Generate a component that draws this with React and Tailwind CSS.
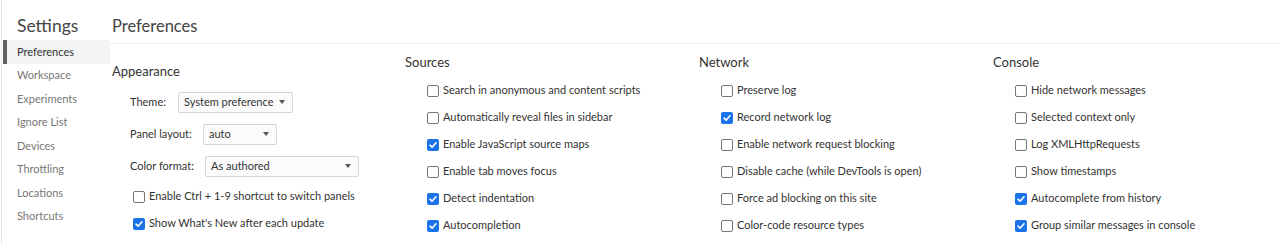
import React from 'react'

const navItems = ['Preferences', 'Workspace', 'Experiments', 'Ignore List', 'Devices', 'Throttling', 'Locations', 'Shortcuts']

const sources = [
  ['Search in anonymous and content scripts', false],
  ['Automatically reveal files in sidebar', false],
  ['Enable JavaScript source maps', true],
  ['Enable tab moves focus', false],
  ['Detect indentation', true],
  ['Autocompletion', true],
]

const network = [
  ['Preserve log', false],
  ['Record network log', true],
  ['Enable network request blocking', false],
  ['Disable cache (while DevTools is open)', false],
  ['Force ad blocking on this site', false],
  ['Color-code resource types', false],
]

const consoleOpts = [
  ['Hide network messages', false],
  ['Selected context only', false],
  ['Log XMLHttpRequests', false],
  ['Show timestamps', false],
  ['Autocomplete from history', true],
  ['Group similar messages in console', true],
]

function Box({ checked }) {
  if (checked) {
    return (
      <span className="flex h-[12px] w-[12px] shrink-0 items-center justify-center rounded-[2px] bg-[#1a73e8]">
        <svg width="10" height="10" viewBox="0 0 10 10" fill="none">
          <path d="M2 5.2 L4.1 7.2 L8 2.8" stroke="white" strokeWidth="1.6" strokeLinecap="round" strokeLinejoin="round" />
        </svg>
      </span>
    )
  }
  return <span className="h-[12px] w-[12px] shrink-0 rounded-[2px] border border-[#767676] bg-white" />
}

function Check({ label, checked }) {
  return (
    <div className="flex h-[27px] items-center gap-[4px]">
      <Box checked={checked} />
      <span className="whitespace-nowrap text-[11px] text-[#333]">{label}</span>
    </div>
  )
}

function Select({ value, width }) {
  return (
    <div
      className={`flex h-[21px] items-center justify-between whitespace-nowrap rounded-[2px] border border-[#d6d6d6] bg-[#fbfbfb] pl-[5px] pr-[7px] text-[11px] text-[#333] ${width}`}
    >
      <span>{value}</span>
      <svg width="6" height="4" viewBox="0 0 6 4">
        <path d="M0 0 L6 0 L3 4 Z" fill="#555" />
      </svg>
    </div>
  )
}

function Column({ title, items }) {
  return (
    <div className="w-[294px] shrink-0 pt-[8px]">
      <div className="h-[20px] text-[13px] leading-[20px] text-[#333]">{title}</div>
      <div className="mt-[5px] pl-[22px]">
        {items.map(([label, checked]) => (
          <Check key={label} label={label} checked={checked} />
        ))}
      </div>
    </div>
  )
}

export default function App() {
  return (
    <div className="flex h-[245px] w-[1280px] overflow-hidden bg-white" style={{ fontFamily: 'Lato, "Liberation Sans", sans-serif' }}>
      <div className="ml-[1px] w-[1px] shrink-0 bg-[#e6e6e6]" />
      <div className="ml-[1px] w-[107px] shrink-0">
        <div className="h-[40px] pl-[14px] pt-[15px] text-[17.5px] leading-[22px] text-[#444]">Settings</div>
        {navItems.map((item, i) => (
          <div
            key={item}
            className={`flex h-[23.5px] items-center text-[11px] ${i === 0 ? 'bg-[#f3f3f3] text-[#333]' : 'text-[#777]'}`}
          >
            <span className={`h-full w-[4px] ${i === 0 ? 'bg-[#616161]' : ''}`} />
            <span className="pl-[10px]">{item}</span>
          </div>
        ))}
      </div>
      <div className="flex min-w-0 flex-1 flex-col">
        <div className="h-[44px] border-b border-[#ececec] pl-[2px] pt-[15px] text-[16.5px] leading-[22px] text-[#444]">Preferences</div>
        <div className="flex min-h-0 flex-1">
          <div className="flex flex-1 pl-[2px]">
            <div className="w-[293px] shrink-0 pt-[17px]">
              <div className="h-[20px] text-[13px] leading-[20px] text-[#333]">Appearance</div>
              <div className="pl-[18px] pt-[10px]">
                <div className="flex h-[22px] items-center text-[11px] text-[#333]">
                  <span className="w-[48px] shrink-0">Theme:</span>
                  <Select value="System preference" width="w-[115px]" />
                </div>
                <div className="mt-[10px] flex h-[22px] items-center text-[11px] text-[#333]">
                  <span className="w-[73px] shrink-0">Panel layout:</span>
                  <Select value="auto" width="w-[74px]" />
                </div>
                <div className="mt-[10px] flex h-[22px] items-center text-[11px] text-[#333]">
                  <span className="w-[75px] shrink-0">Color format:</span>
                  <Select value="As authored" width="w-[154px]" />
                </div>
                <div className="mt-[6px] pl-[3px]">
                  <Check label="Enable Ctrl + 1-9 shortcut to switch panels" checked={false} />
                  <Check label="Show What's New after each update" checked={true} />
                </div>
              </div>
            </div>
            <Column title="Sources" items={sources} />
            <Column title="Network" items={network} />
            <Column title="Console" items={consoleOpts} />
          </div>
          <div className="w-[4px] shrink-0 border-l border-[#f0f0f0] bg-[#fafafa] pt-[14px]">
            <div className="h-[44px] w-full bg-[#c4c4c4]" />
          </div>
        </div>
      </div>
    </div>
  )
}
